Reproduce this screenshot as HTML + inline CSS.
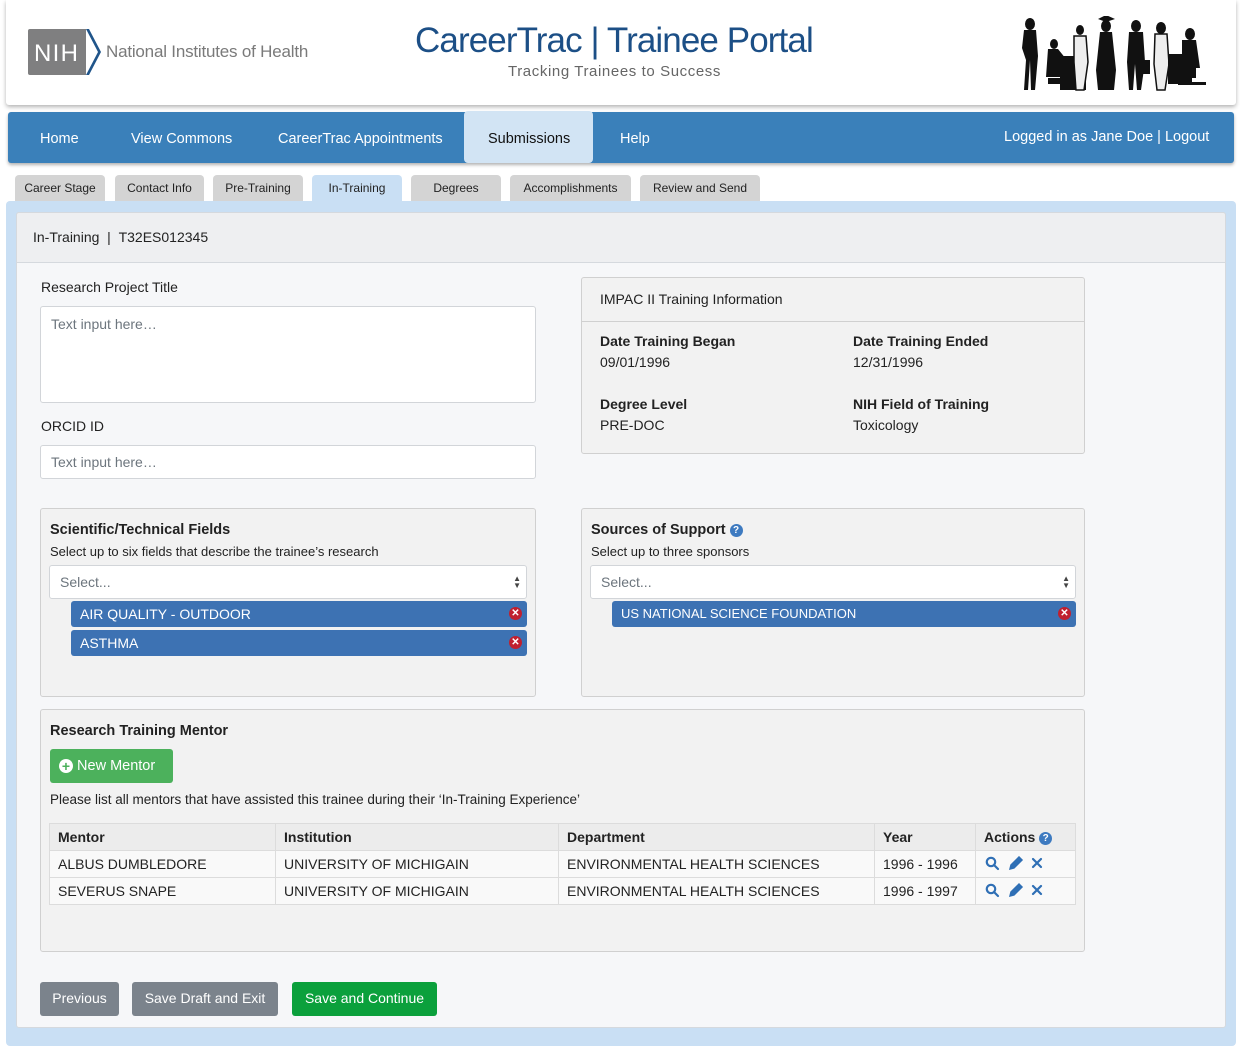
<!DOCTYPE html>
<html><head><meta charset="utf-8"><style>
*{box-sizing:border-box;margin:0;padding:0}
body{width:1240px;height:1054px;background:#fff;font-family:"Liberation Sans",Arial,sans-serif;color:#222;position:relative;overflow:hidden}
.a{position:absolute}
.hdr{left:6px;top:0;width:1230px;height:105px;background:#fff;box-shadow:0 2px 4px rgba(0,0,0,.3);border-radius:0 0 3px 3px}
.nav{left:8px;top:112px;width:1226px;height:51px;background:#3a80ba;border-radius:3px;box-shadow:0 2px 3px rgba(0,0,0,.3)}
.ni{color:#fff;font-size:14.5px;top:131px}
.tab{top:175px;height:27px;background:#d4d4d4;border-radius:4px 4px 0 0;font-size:12px;color:#222;text-align:center;line-height:26px}
.outer{left:6px;top:201px;width:1230px;height:845px;background:#c9dff4;border-radius:4px}
.card{left:16px;top:212px;width:1210px;height:816px;background:#f6f7f9;border:1px solid #d5d9de;border-radius:3px}
.ch{left:16px;top:212px;width:1210px;height:51px;background:#eeeff1;border:1px solid #d5d9de;border-radius:3px 3px 0 0}
.lbl{font-size:14px;color:#222}
.inp{background:#fff;border:1px solid #d2d5d9;border-radius:3px;color:#6c757d;font-size:14px;padding:9px 10px}
.box{background:#f2f2f2;border:1px solid #d0d0d0;border-radius:3px}
.b{font-weight:bold;font-size:14px}
.pill{background:#3d72b3;color:#fff;font-size:14px;height:26px;line-height:26px;padding-left:9px;border-radius:3px}
.x{position:absolute;right:5px;top:6px;width:13px;height:13px;border-radius:50%;background:#c0202f;color:#fff;font-size:10px;line-height:13px;text-align:center;font-weight:bold}
.sel{background:#fff;border:1px solid #d2d5d9;border-radius:3px;color:#6c757d;font-size:14px;height:34px;line-height:32px;padding-left:10px}
.arr{position:absolute;right:5px;top:9px;font-size:8px;line-height:7px;color:#444}
table{border-collapse:collapse;font-size:14px}
td,th{border:1px solid #dcdcdc;padding:0 8px;height:27px;text-align:left}
th{background:#ececec}
td{background:#f9f9f9}
.btn{top:982px;height:34px;line-height:33px;color:#fff;font-size:14px;border-radius:3px;text-align:center}
.q{display:inline-block;width:13px;height:13px;border-radius:50%;background:#3d7ac0;color:#fff;font-size:10px;line-height:13px;text-align:center;vertical-align:1px}
</style></head><body>
<div class="a hdr"></div>
<svg class="a" style="left:28px;top:29px" width="74" height="46" viewBox="0 0 74 46"><path d="M2 0h56l0 46H2a2 2 0 0 1-2-2V2a2 2 0 0 1 2-2z" fill="#7f7f80"/><path d="M58 0h3l12 23-12 23h-3l12-23z" fill="#20558a"/><text x="6" y="32" font-family="Liberation Sans" font-size="24" fill="#fff" textLength="44">NIH</text></svg>
<div class="a" style="left:106px;top:42px;font-size:17px;color:#7a7a7a;letter-spacing:-0.2px">National Institutes of Health</div>
<div class="a" style="left:415px;top:21px;font-size:35px;color:#1c4f86;letter-spacing:-0.9px;white-space:nowrap">CareerTrac | Trainee Portal</div>
<div class="a" style="left:508px;top:63px;font-size:15px;color:#666;letter-spacing:0.6px">Tracking Trainees to Success</div>
<svg class="a" style="left:1018px;top:16px" width="190" height="76" viewBox="0 0 190 76" fill="#111">
<ellipse cx="12" cy="8" rx="5" ry="6"/><path d="M6 14h12l2 26-3 34h-4l-1-30-2 30H6l2-30-4-12z"/>
<ellipse cx="36" cy="28" rx="4" ry="5"/><path d="M30 33h10l8 10h8v8h-12v10h-16z"/><path d="M30 62h24v6H30z"/><path d="M42 40h26v34H42z"/>
<ellipse cx="62" cy="14" rx="4" ry="5"/><path d="M56 20h12l2 26-4 28h-8l-2-28z" fill="#eee" stroke="#111" stroke-width="1.5"/>
<ellipse cx="88" cy="10" rx="5" ry="6"/><path d="M80 3l8-4 9 4-9 3z"/><path d="M82 16h12l4 38-2 20H80l-2-20z"/>
<ellipse cx="118" cy="10" rx="5" ry="6"/><path d="M111 16h14l2 30-4 28h-4l-2-26-2 26h-4l-2-28z"/><path d="M122 44h10v14h-10z"/>
<ellipse cx="143" cy="12" rx="5" ry="6"/><path d="M137 18h12l2 30-4 26h-8l-3-26z" fill="#eee" stroke="#111" stroke-width="1.5"/>
<ellipse cx="172" cy="18" rx="5" ry="6"/><path d="M164 24h14l4 28h-4v10h-18l-4-14h8z"/><path d="M150 38h24v30h-24z"/><path d="M160 66h28v3h-28z"/>
</svg>
<div class="a nav"></div>
<div class="a" style="left:464px;top:111px;width:129px;height:52px;background:#d2e4f4;border-radius:4px"></div>
<div class="a ni" style="left:40px">Home</div>
<div class="a ni" style="left:131px">View Commons</div>
<div class="a ni" style="left:278px">CareerTrac Appointments</div>
<div class="a ni" style="left:488px;color:#111">Submissions</div>
<div class="a ni" style="left:620px">Help</div>
<div class="a ni" style="left:1004px;top:129px">Logged in as Jane Doe | Logout</div>
<div class="a tab" style="left:15px;width:90px">Career Stage</div>
<div class="a tab" style="left:115px;width:89px">Contact Info</div>
<div class="a tab" style="left:213px;width:90px">Pre-Training</div>
<div class="a tab" style="left:312px;width:90px;background:#c9dff4">In-Training</div>
<div class="a tab" style="left:411px;width:90px">Degrees</div>
<div class="a tab" style="left:510px;width:121px">Accomplishments</div>
<div class="a tab" style="left:640px;width:120px">Review and Send</div>
<div class="a outer"></div>
<div class="a card"></div>
<div class="a ch"></div>
<div class="a" style="left:33px;top:229px;font-size:14px">In-Training &nbsp;| &nbsp;T32ES012345</div>

<div class="a lbl" style="left:41px;top:279px">Research Project Title</div>
<div class="a inp" style="left:40px;top:306px;width:496px;height:97px">Text input here…</div>
<div class="a lbl" style="left:41px;top:418px">ORCID ID</div>
<div class="a inp" style="left:40px;top:445px;width:496px;height:34px;padding-top:8px">Text input here…</div>

<div class="a box" style="left:581px;top:277px;width:504px;height:177px"></div>
<div class="a" style="left:582px;top:321px;width:502px;border-top:1px solid #d0d0d0"></div>
<div class="a lbl" style="left:600px;top:291px">IMPAC II Training Information</div>
<div class="a b" style="left:600px;top:333px">Date Training Began</div>
<div class="a lbl" style="left:600px;top:354px">09/01/1996</div>
<div class="a b" style="left:853px;top:333px">Date Training Ended</div>
<div class="a lbl" style="left:853px;top:354px">12/31/1996</div>
<div class="a b" style="left:600px;top:396px">Degree Level</div>
<div class="a lbl" style="left:600px;top:417px">PRE-DOC</div>
<div class="a b" style="left:853px;top:396px">NIH Field of Training</div>
<div class="a lbl" style="left:853px;top:417px">Toxicology</div>

<div class="a box" style="left:40px;top:508px;width:496px;height:189px"></div>
<div class="a b" style="left:50px;top:522px;font-size:14.5px">Scientific/Technical Fields</div>
<div class="a" style="left:50px;top:544px;font-size:13px">Select up to six fields that describe the trainee’s research</div>
<div class="a sel" style="left:49px;top:565px;width:478px">Select...<div class="arr">▲<br>▼</div></div>
<div class="a pill" style="left:71px;top:601px;width:456px">AIR QUALITY - OUTDOOR<span class="x">✕</span></div>
<div class="a pill" style="left:71px;top:630px;width:456px">ASTHMA<span class="x">✕</span></div>

<div class="a box" style="left:581px;top:508px;width:504px;height:189px"></div>
<div class="a b" style="left:591px;top:522px;font-size:14.5px">Sources of Support <span class="q">?</span></div>
<div class="a" style="left:591px;top:544px;font-size:13px">Select up to three sponsors</div>
<div class="a sel" style="left:590px;top:565px;width:486px">Select...<div class="arr">▲<br>▼</div></div>
<div class="a pill" style="left:612px;top:601px;width:464px;font-size:13px">US NATIONAL SCIENCE FOUNDATION<span class="x">✕</span></div>

<div class="a box" style="left:40px;top:709px;width:1045px;height:243px"></div>
<div class="a b" style="left:50px;top:723px;font-size:14.5px">Research Training Mentor</div>
<div class="a" style="left:50px;top:749px;width:123px;height:34px;background:#4cb15c;border-radius:3px;color:#fff;font-size:14.5px;line-height:34px;padding-left:9px"><span style="display:inline-block;width:14px;height:14px;border-radius:50%;background:#fff;color:#4cb15c;font-weight:bold;font-size:14px;line-height:14px;text-align:center;vertical-align:-1px">+</span> New Mentor</div>
<div class="a" style="left:50px;top:792px;font-size:13.5px">Please list all mentors that have assisted this trainee during their ‘In-Training Experience’</div>
<table class="a" style="left:49px;top:823px;width:1027px">
<tr><th style="width:226px">Mentor</th><th style="width:283px">Institution</th><th style="width:316px">Department</th><th style="width:101px">Year</th><th>Actions <span class="q">?</span></th></tr>
<tr><td>ALBUS DUMBLEDORE</td><td>UNIVERSITY OF MICHIGAIN</td><td>ENVIRONMENTAL HEALTH SCIENCES</td><td>1996 - 1996</td><td></td></tr>
<tr><td>SEVERUS SNAPE</td><td>UNIVERSITY OF MICHIGAIN</td><td>ENVIRONMENTAL HEALTH SCIENCES</td><td>1996 - 1997</td><td></td></tr>
</table>
<svg class="a" style="left:985px;top:856px" width="60" height="42" viewBox="0 0 60 42" fill="none" stroke="#2f6fb5" stroke-width="2.2" stroke-linecap="round">
<g><circle cx="6" cy="6" r="4.2"/><path d="M9 9l4 4"/><path d="M25 13l1-4 8-8 3 3-8 8z" fill="#2f6fb5" stroke-width="1.5"/><path d="M48 3l8 8M56 3l-8 8"/></g>
<g transform="translate(0,27)"><circle cx="6" cy="6" r="4.2"/><path d="M9 9l4 4"/><path d="M25 13l1-4 8-8 3 3-8 8z" fill="#2f6fb5" stroke-width="1.5"/><path d="M48 3l8 8M56 3l-8 8"/></g>
</svg>

<div class="a btn" style="left:40px;width:79px;background:#7b838c">Previous</div>
<div class="a btn" style="left:132px;width:146px;background:#7b838c">Save Draft and Exit</div>
<div class="a btn" style="left:292px;width:145px;background:#0ba03c">Save and Continue</div>
</body></html>
